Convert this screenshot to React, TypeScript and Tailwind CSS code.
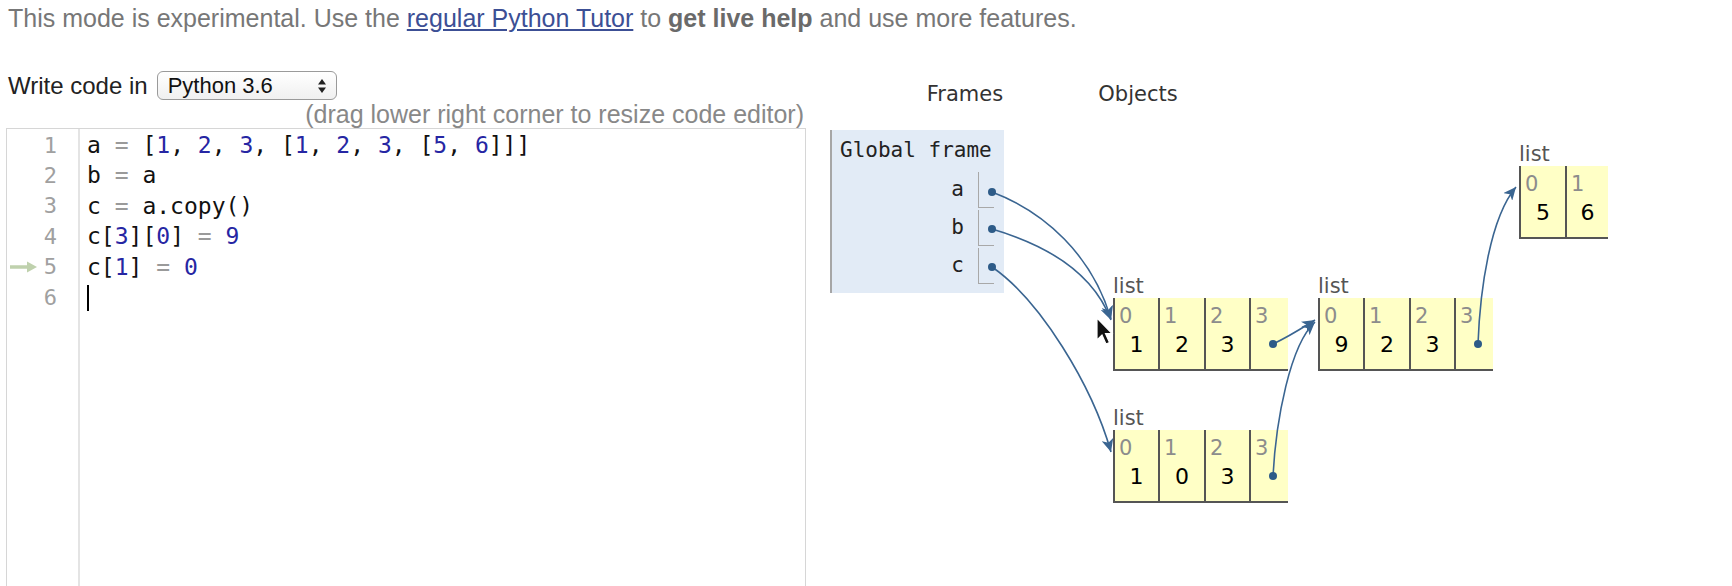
import React from "react";

const sans = { fontFamily: '"Liberation Sans", Arial, sans-serif' };
const mono = { fontFamily: '"DejaVu Sans Mono", "Liberation Mono", monospace' };
const verdana = { fontFamily: '"DejaVu Sans", Verdana, sans-serif' };

type Cell = { idx: string; val?: string; w: number };

function ListObj({ cells }: { cells: Cell[] }) {
  return (
    <div className="flex flex-col" style={verdana}>
      <div className="h-[23px] leading-[23px] text-[21px] text-[#555]">list</div>
      <div className="flex border-b-2 border-[#555] bg-[#ffffc6]">
        {cells.map((c, i) => (
          <div
            key={i}
            className="h-[71px] border-l-2 border-[#555] pt-[6px] flex flex-col"
            style={{ width: c.w }}
          >
            <div className="leading-[24px] text-[21px] text-[#8c8c8c] pl-[4px]">{c.idx}</div>
            <div className="mt-[4px] leading-[26px] text-[22px] text-black text-center">{c.val ?? ""}</div>
          </div>
        ))}
      </div>
    </div>
  );
}

const N = ({ children }: { children: React.ReactNode }) => (
  <span className="text-[#2626a3]">{children}</span>
);
const Op = ({ children }: { children: React.ReactNode }) => (
  <span className="text-[#9a9a9a]">{children}</span>
);

const codeLines: React.ReactNode[] = [
  <>
    a <Op>=</Op> [<N>1</N>, <N>2</N>, <N>3</N>, [<N>1</N>, <N>2</N>, <N>3</N>, [<N>5</N>, <N>6</N>]]]
  </>,
  <>
    b <Op>=</Op> a
  </>,
  <>
    c <Op>=</Op> a.copy()
  </>,
  <>
    c[<N>3</N>][<N>0</N>] <Op>=</Op> <N>9</N>
  </>,
  <>
    c[<N>1</N>] <Op>=</Op> <N>0</N>
  </>,
  <>
    <span className="inline-block w-[2px] h-[26px] bg-black align-middle" />
  </>,
];

export default function App() {
  return (
    <div className="relative w-[1732px] h-[586px] overflow-hidden bg-white" style={sans}>
      {/* top notice */}
      <div className="h-[36px] pl-[8px] flex items-center text-[25px] leading-none text-[#777]">
        <span>
          This mode is experimental. Use the{" "}
          <a className="text-[#3c4f95] underline">regular Python Tutor</a> to{" "}
          <b className="text-[#6a6a6a]">get live help</b> and use more features.
        </span>
      </div>

      <div className="flex mt-[35px]">
        {/* left column */}
        <div className="w-[806px] pl-[6px] flex flex-col">
          <div className="flex items-center h-[29px] pl-[2px]">
            <span className="text-[24px] text-[#222] leading-none">Write code in</span>
            <div className="ml-[9px] w-[180px] h-[29px] rounded-[6px] border border-[#9a9a9a] bg-gradient-to-b from-white to-[#f0f0f0] flex items-center pl-[10px] pr-[9px]">
              <span className="text-[22px] text-[#111] leading-none">Python 3.6</span>
              <svg className="ml-auto" width="10" height="16" viewBox="0 0 10 16">
                <path d="M5 1 L9 6.5 L1 6.5 Z" fill="#222" />
                <path d="M5 15 L9 9.5 L1 9.5 Z" fill="#222" />
              </svg>
            </div>
          </div>
          <div className="h-[28px] flex items-center justify-end pr-[2px] text-[25px] leading-none text-[#888]">
            (drag lower right corner to resize code editor)
          </div>
          <div className="h-[480px] border border-[#d6d6d6] flex">
            <div className="w-[73px] border-r-2 border-[#e4e4e4] pt-[1px]" style={mono}>
              {codeLines.map((_, i) => (
                <div key={i} className="h-[30.4px] flex items-center pl-[2px] pr-[21px] text-[22px] text-[#a0a0a0]">
                  {i === 4 && (
                    <svg width="30" height="14" viewBox="0 0 30 14">
                      <path d="M1 7 H20" stroke="#bfd1ad" strokeWidth="3.5" />
                      <path d="M18 1.5 L28 7 L18 12.5 Z" fill="#bfd1ad" />
                    </svg>
                  )}
                  <span className="ml-auto">{i + 1}</span>
                </div>
              ))}
            </div>
            <div className="pl-[7px] pt-[1px] text-[23px] text-[#111]" style={mono}>
              {codeLines.map((l, i) => (
                <div key={i} className="h-[30.4px] leading-[30.4px] whitespace-pre">
                  {l}
                </div>
              ))}
            </div>
          </div>
        </div>

        {/* visualization */}
        <div className="relative flex-1">
          <div className="mt-[10px] h-[28px] flex items-center text-[21px] text-[#333]" style={verdana}>
            <div className="ml-[24px] w-[270px] flex justify-center">Frames</div>
            <div className="w-[76px] flex justify-center">Objects</div>
          </div>
          <div className="mt-[21px] ml-[24px] w-[174px] bg-[#e2ebf6] border-l-2 border-[#a6a6a6] pt-[8px] pb-[9px] pl-[8px] pr-[10px]" style={mono}>
            <div className="leading-[24px] text-[21px] text-[#222] whitespace-nowrap">Global frame</div>
            <div className="mt-[10px] flex flex-col gap-[2px]">
              {["a", "b", "c"].map((v) => (
                <div key={v} className="flex items-center h-[36px]">
                  <span className="ml-auto text-[21px] text-[#222]">{v}</span>
                  <div className="ml-[14px] w-[16px] h-[36px] border-l border-b border-[#a8a8a8]" />
                </div>
              ))}
            </div>
          </div>

          {/* objects (diagram nodes) */}
          <div className="absolute left-[307px] top-[204px]">
            <ListObj cells={[{ idx: "0", val: "1", w: 45 }, { idx: "1", val: "2", w: 46 }, { idx: "2", val: "3", w: 45 }, { idx: "3", w: 39 }]} />
          </div>
          <div className="absolute left-[512px] top-[204px]">
            <ListObj cells={[{ idx: "0", val: "9", w: 45 }, { idx: "1", val: "2", w: 46 }, { idx: "2", val: "3", w: 45 }, { idx: "3", w: 39 }]} />
          </div>
          <div className="absolute left-[307px] top-[336px]">
            <ListObj cells={[{ idx: "0", val: "1", w: 45 }, { idx: "1", val: "0", w: 46 }, { idx: "2", val: "3", w: 45 }, { idx: "3", w: 39 }]} />
          </div>
          <div className="absolute left-[713px] top-[72px]">
            <ListObj cells={[{ idx: "0", val: "5", w: 46 }, { idx: "1", val: "6", w: 43 }]} />
          </div>
        </div>
      </div>

      {/* arrows overlay */}
      <svg className="absolute inset-0 pointer-events-none" width="1732" height="586">
        <defs>
          <marker id="ah" markerUnits="userSpaceOnUse" markerWidth="14" markerHeight="12" refX="13" refY="6" orient="auto">
            <path d="M0 0 L13 6 L0 12 L3.5 6 Z" fill="#3a6591" />
          </marker>
        </defs>
        <g stroke="#3a6591" strokeWidth="1.6" fill="none" markerEnd="url(#ah)">
          <path d="M992 192 C1045 212 1092 255 1111 319" />
          <path d="M992 229 C1050 246 1094 275 1111 320" />
          <path d="M992 267 C1040 300 1092 385 1111 452" />
          <path d="M1273 344 C1290 336 1302 328 1315 320" />
          <path d="M1273 476 C1276 420 1290 345 1315 322" />
          <path d="M1478 344 C1480 290 1490 218 1516 187" />
        </g>
        <g fill="#2d5b88">
          <circle cx="992" cy="192" r="4" />
          <circle cx="992" cy="229" r="4" />
          <circle cx="992" cy="267" r="4" />
          <circle cx="1273" cy="344" r="4" />
          <circle cx="1273" cy="476" r="4" />
          <circle cx="1478" cy="344" r="4" />
        </g>
        {/* mouse cursor */}
        <path
          d="M1097 318 L1097 340 L1102 335 L1106 344 L1109.5 342.5 L1105.5 333.5 L1112 333.5 Z"
          fill="#111"
          stroke="#fff"
          strokeWidth="1.2"
        />
      </svg>
    </div>
  );
}
